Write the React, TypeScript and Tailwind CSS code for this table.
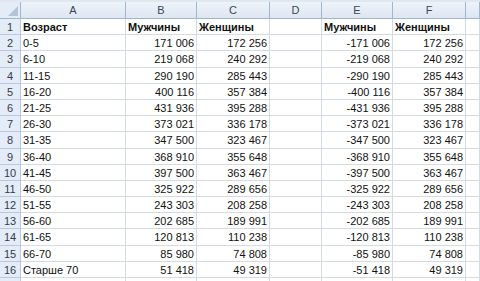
const cols = ["A", "B", "C", "D", "E", "F", ""];

const rows: [string, string, string, string, string][] = [
  ["0-5", "171 006", "172 256", "-171 006", "172 256"],
  ["6-10", "219 068", "240 292", "-219 068", "240 292"],
  ["11-15", "290 190", "285 443", "-290 190", "285 443"],
  ["16-20", "400 116", "357 384", "-400 116", "357 384"],
  ["21-25", "431 936", "395 288", "-431 936", "395 288"],
  ["26-30", "373 021", "336 178", "-373 021", "336 178"],
  ["31-35", "347 500", "323 467", "-347 500", "323 467"],
  ["36-40", "368 910", "355 648", "-368 910", "355 648"],
  ["41-45", "397 500", "363 467", "-397 500", "363 467"],
  ["46-50", "325 922", "289 656", "-325 922", "289 656"],
  ["51-55", "243 303", "208 258", "-243 303", "208 258"],
  ["56-60", "202 685", "189 991", "-202 685", "189 991"],
  ["61-65", "120 813", "110 238", "-120 813", "110 238"],
  ["66-70", "85 980", "74 808", "-85 980", "74 808"],
  ["Старше 70", "51 418", "49 319", "-51 418", "49 319"],
];

const grid = "grid grid-cols-[21px_105px_71px_73px_52px_71px_73px_1fr]";
const cell = "h-[16.2px] border-r border-b border-[#d4dae6] px-[2px] leading-[16px] whitespace-nowrap overflow-hidden";
const rowHead =
  "h-[16.2px] border-r border-b border-[#b9c9dd] bg-[#e4ecf7] text-center leading-[16px] text-[#333c4a]";

export default function App() {
  return (
    <div
      className="w-[480px] h-[281px] overflow-hidden bg-white text-[11px] text-[#111]"
      style={{ fontFamily: '"Liberation Sans", Arial, sans-serif' }}
    >
      <div className="h-[2px] bg-[#dfe7f1]" />
      <div className={grid}>
        <div className="relative h-[17px] border-r border-b border-[#9eb6ce] bg-[#e4ecf7]">
          <svg className="absolute right-[2px] bottom-[2px]" width="10" height="10" viewBox="0 0 10 10">
            <polygon points="10,0 10,10 0,10" fill="#b3c4d9" />
          </svg>
        </div>
        {cols.map((c, i) => (
          <div
            key={i}
            className="h-[17px] border-r border-b border-[#9eb6ce] bg-gradient-to-b from-[#eef3fa] to-[#dde6f2] text-center leading-[16px] text-[#3b4656]"
          >
            {c}
          </div>
        ))}

        <div className={rowHead}>1</div>
        <div className={`${cell} font-bold`}>Возраст</div>
        <div className={`${cell} font-bold`}>Мужчины</div>
        <div className={`${cell} font-bold`}>Женщины</div>
        <div className={cell} />
        <div className={`${cell} font-bold`}>Мужчины</div>
        <div className={`${cell} font-bold`}>Женщины</div>
        <div className={cell} />

        {rows.map((r, i) => (
          <div key={i} className="contents">
            <div className={rowHead}>{i + 2}</div>
            <div className={cell}>{r[0]}</div>
            <div className={`${cell} text-right`}>{r[1]}</div>
            <div className={`${cell} text-right`}>{r[2]}</div>
            <div className={cell} />
            <div className={`${cell} text-right`}>{r[3]}</div>
            <div className={`${cell} text-right`}>{r[4]}</div>
            <div className={cell} />
          </div>
        ))}

        <div className={rowHead} />
        {cols.map((_, i) => (
          <div key={i} className={cell} />
        ))}
      </div>
    </div>
  );
}
